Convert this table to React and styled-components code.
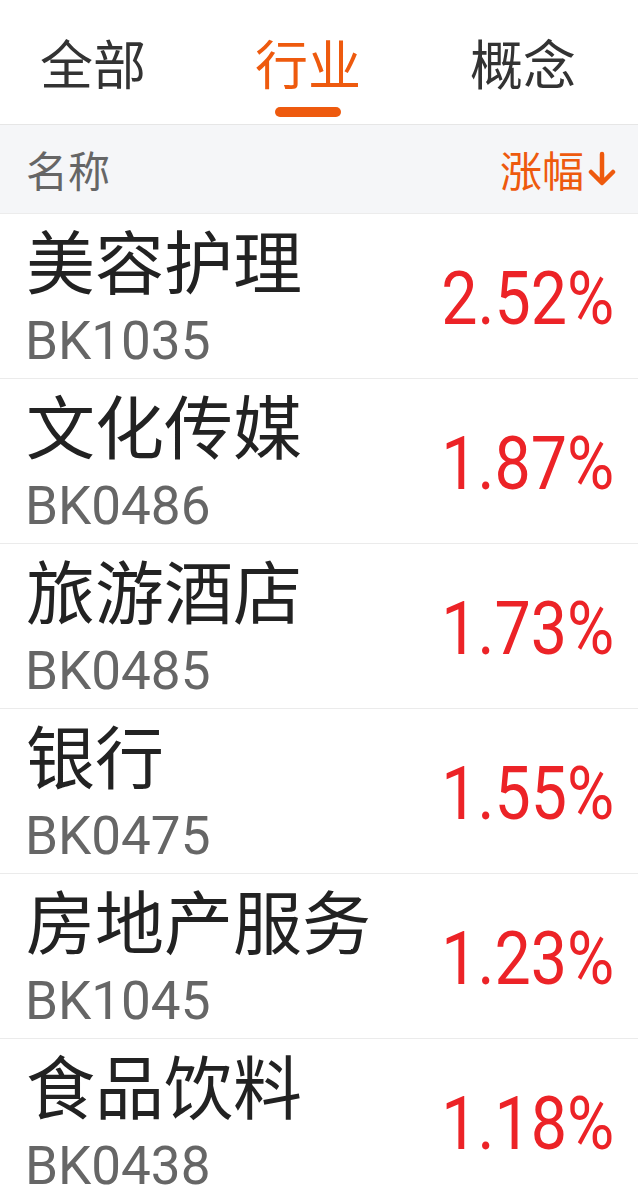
import { createGlobalStyle } from "styled-components";
import styled from "styled-components";

const GlobalStyle = createGlobalStyle`
  html, body {
    margin: 0;
    padding: 0;
    background: #ffffff;
  }
  body {
    font-family: "Noto Sans CJK SC", "Noto Sans", sans-serif;
  }
`;

const ORANGE = "#ee5a0e";
const RED = "#ec2327";

const SC = {
  Page: styled.div`
    width: 638px;
    min-height: 1191px;
    overflow: hidden;
    background: #fff;
  `,
  Tabs: styled.nav`
    display: flex;
    gap: 109px;
    padding: 36px 0 7px 40px;
    border-bottom: 1px solid #e6e6e6;
  `,
  Tab: styled.div`
    display: flex;
    flex-direction: column;
    align-items: center;
    gap: 18px;
    font-size: 53px;
    line-height: 53px;
    color: ${(p) => (p.$active ? ORANGE : "#333333")};
  `,
  Underline: styled.span`
    width: 66px;
    height: 10px;
    border-radius: 5px;
    background: ${(p) => (p.$show ? ORANGE : "transparent")};
  `,
  Header: styled.div`
    display: flex;
    align-items: center;
    justify-content: space-between;
    height: 88px;
    padding: 0 22px 0 26px;
    background: #f5f6f8;
    border-bottom: 1px solid #ececec;
    font-size: 42px;
    line-height: 42px;
  `,
  HeaderLabel: styled.span`
    color: #666666;
  `,
  Sort: styled.span`
    display: flex;
    align-items: center;
    gap: 4px;
    color: ${ORANGE};
  `,
  Row: styled.div`
    display: flex;
    align-items: center;
    justify-content: space-between;
    height: 164px;
    padding: 0 24px 0 26px;
    border-bottom: 1px solid #ebebeb;
    box-sizing: content-box;
  `,
  Info: styled.div`
    display: flex;
    flex-direction: column;
    gap: 21px;
    align-self: flex-start;
    padding-top: 11px;
  `,
  Name: styled.div`
    font-size: 69px;
    line-height: 69px;
    color: #222222;
    white-space: nowrap;
  `,
  Code: styled.div`
    font-family: Roboto, "Liberation Sans", sans-serif;
    font-size: 53px;
    line-height: 53px;
    color: #666666;
    margin-left: -1px;
  `,
  Change: styled.div`
    font-family: Roboto, "Liberation Sans", sans-serif;
    font-size: 75px;
    line-height: 75px;
    color: ${RED};
    transform: scaleX(0.86);
    transform-origin: right center;
    margin-top: 4px;
  `,
};

const rows = [
  { name: "美容护理", code: "BK1035", change: "2.52%" },
  { name: "文化传媒", code: "BK0486", change: "1.87%" },
  { name: "旅游酒店", code: "BK0485", change: "1.73%" },
  { name: "银行", code: "BK0475", change: "1.55%" },
  { name: "房地产服务", code: "BK1045", change: "1.23%" },
  { name: "食品饮料", code: "BK0438", change: "1.18%" },
];

const tabs = ["全部", "行业", "概念"];

function DownArrow() {
  return (
    <svg width="28" height="36" viewBox="0 0 28 36">
      <path
        d="M14 3 V31 M3 21 L14 32 L25 21"
        fill="none"
        stroke={ORANGE}
        strokeWidth="4.5"
        strokeLinecap="round"
        strokeLinejoin="round"
      />
    </svg>
  );
}

export default function App() {
  return (
    <SC.Page>
      <GlobalStyle />
      <SC.Tabs>
        {tabs.map((t, i) => (
          <SC.Tab key={t} $active={i === 1}>
            {t}
            <SC.Underline $show={i === 1} />
          </SC.Tab>
        ))}
      </SC.Tabs>
      <SC.Header>
        <SC.HeaderLabel>名称</SC.HeaderLabel>
        <SC.Sort>
          涨幅
          <DownArrow />
        </SC.Sort>
      </SC.Header>
      {rows.map((r) => (
        <SC.Row key={r.code}>
          <SC.Info>
            <SC.Name>{r.name}</SC.Name>
            <SC.Code>{r.code}</SC.Code>
          </SC.Info>
          <SC.Change>{r.change}</SC.Change>
        </SC.Row>
      ))}
    </SC.Page>
  );
}
